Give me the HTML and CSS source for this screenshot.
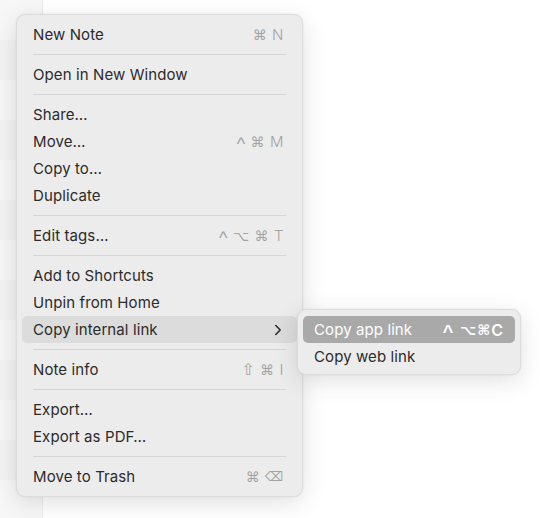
FILE: index.html
```html
<!DOCTYPE html>
<html>
<head>
<meta charset="utf-8">
<link rel="stylesheet" href="styles.css">
</head>
<body>
<div class="page">
  <div class="strip"></div>
  <div class="content"></div>
</div>
<div class="menu main">
  <div class="item"><span>New Note</span><span class="key">⌘ <span class="l">N</span></span></div>
  <div class="sep"></div>
  <div class="item"><span>Open in New Window</span></div>
  <div class="sep"></div>
  <div class="item"><span>Share…</span></div>
  <div class="item"><span>Move…</span><span class="key"><span class="c">^</span> ⌘ <span class="l">M</span></span></div>
  <div class="item"><span>Copy to…</span></div>
  <div class="item"><span>Duplicate</span></div>
  <div class="sep"></div>
  <div class="item"><span>Edit tags…</span><span class="key"><span class="c">^</span> ⌥ ⌘ <span class="l">T</span></span></div>
  <div class="sep"></div>
  <div class="item"><span>Add to Shortcuts</span></div>
  <div class="item"><span>Unpin from Home</span></div>
  <div class="item open"><span>Copy internal link</span><svg class="chev" width="8" height="12" viewBox="0 0 8 12"><path d="M1.8 1.5 L6.2 6 L1.8 10.5" fill="none" stroke="#2b2b2b" stroke-width="1.6" stroke-linecap="round" stroke-linejoin="round"/></svg></div>
  <div class="sep"></div>
  <div class="item"><span>Note info</span><span class="key"><span class="sh">⇧</span> ⌘ <span class="l">I</span></span></div>
  <div class="sep"></div>
  <div class="item"><span>Export…</span></div>
  <div class="item"><span>Export as PDF…</span></div>
  <div class="sep"></div>
  <div class="item"><span>Move to Trash</span><span class="key">⌘ <span class="del">⌫</span></span></div>
</div>
<div class="menu sub">
  <div class="item active"><span>Copy app link</span><span class="key strong"><span class="c">^</span> ⌥⌘<span class="l">C</span></span></div>
  <div class="item"><span>Copy web link</span></div>
</div>
</body>
</html>
```
FILE: styles.css
```css
html, body {
  margin: 0;
  padding: 0;
  background: #ffffff;
}
body {
  width: 540px;
  height: 518px;
  overflow: hidden;
  position: relative;
  font-family: Inter, "Liberation Sans", "DejaVu Sans", sans-serif;
}
.page {
  display: flex;
  height: 518px;
}
.strip {
  width: 42px;
  background: repeating-linear-gradient(to bottom, #f7f7f7 0, #f7f7f7 40px, #f3f3f3 40px, #f3f3f3 80px);
  border-right: 1px solid #ececec;
}
.content {
  flex: 1;
  background: #ffffff;
}
.menu {
  position: absolute;
  background: #ececec;
  border: 1px solid #dcdcdc;
  border-radius: 9px;
  padding: 6px 0 4px;
  box-shadow: 0 6px 24px rgba(0, 0, 0, 0.12), 0 0 2px rgba(0, 0, 0, 0.08);
  box-sizing: border-box;
}
.main {
  left: 16px;
  top: 14px;
  width: 287px;
  height: 483px;
}
.sub {
  left: 297px;
  top: 309px;
  width: 224px;
  height: 66px;
}
.item {
  height: 27px;
  margin: 0 5px;
  padding: 0 13px 0 11px;
  display: flex;
  align-items: center;
  justify-content: space-between;
  font-size: 15px;
  color: #2b2b2b;
  border-radius: 5px;
  letter-spacing: 0.1px;
}
.sep {
  height: 13px;
  display: flex;
  align-items: center;
  margin: 0 16px;
}
.sep::before {
  content: "";
  display: block;
  width: 100%;
  height: 1px;
  background: #d6d6d6;
}
.key {
  color: #a3a3a3;
  font-family: "DejaVu Sans", Inter, sans-serif;
  font-size: 14px;
  letter-spacing: 0.5px;
  display: flex;
  align-items: center;
  white-space: pre;
}
.key .l {
  font-family: Inter, sans-serif;
  font-size: 15px;
  font-weight: 300;
}
.key .c {
  font-family: "Liberation Sans", sans-serif;
  font-size: 18px;
  position: relative;
  top: 3px;
}
.key .sh {
  font-size: 16px;
}
.key .del {
  font-size: 13px;
}
.open {
  background: #dcdcdc;
  padding-right: 15px;
}
.active {
  background: #a9a9a9;
  color: #ffffff;
  padding-right: 11px;
}
.key.strong {
  color: #ffffff;
  font-weight: bold;
  font-size: 14px;
  letter-spacing: 1px;
}
.key.strong .l {
  font-weight: 600;
  font-size: 16px;
}
```
